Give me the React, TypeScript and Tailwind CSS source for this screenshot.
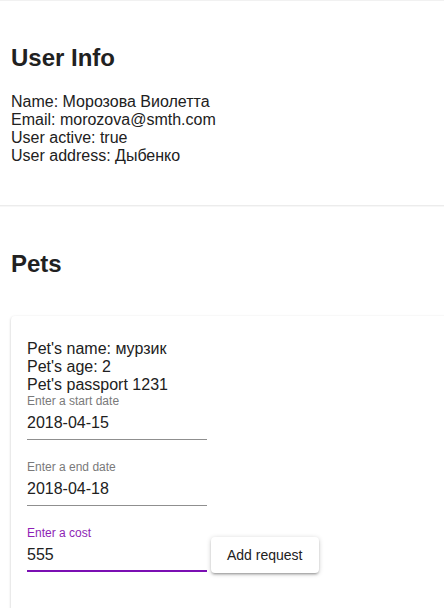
import React from "react";

const font = { fontFamily: '"Liberation Sans", Arial, sans-serif' };

function Field({
  label,
  value,
  focused = false,
  className = "",
}: {
  label: string;
  value: string;
  focused?: boolean;
  className?: string;
}) {
  return (
    <div className={`relative h-12 w-[180px] ${className}`}>
      <label
        className={`absolute left-0 top-[3px] text-[12px] leading-[12px] ${
          focused ? "text-[#8e1fb5]" : "text-[#7a7a7a]"
        }`}
      >
        {label}
      </label>
      <div
        className={`absolute inset-x-0 bottom-0 h-8 pt-[5px] text-[16px] leading-[19px] text-[#212121] ${
          focused ? "border-b-2 border-[#7b0fb3]" : "border-b border-[#8f8f8f]"
        }`}
      >
        {value}
      </div>
    </div>
  );
}

export default function App() {
  return (
    <div style={font} className="h-[608px] overflow-hidden bg-white text-[#212121]">
      <div className="h-px bg-[#f1f1f1]" />

      <section className="px-[11px] pt-[43px] pb-[40px]">
        <h2 className="text-[24px] font-bold leading-[28px]">User Info</h2>
        <div className="mt-[21px] text-[16px] leading-[18px]">
          <div>Name: Морозова Виолетта</div>
          <div>Email: morozova@smth.com</div>
          <div>User active: true</div>
          <div>User address: Дыбенко</div>
        </div>
      </section>

      <div className="h-px bg-[#ececec]" />
      <div className="h-px bg-[#f7f7f7]" />

      <section className="pl-[11px] pt-[43px]">
        <h2 className="text-[24px] font-bold leading-[28px]">Pets</h2>
        <div className="mt-[38px] w-[calc(100%+20px)] rounded-[4px] bg-white pl-4 pt-6 pb-10 shadow-[0_1px_3px_rgba(0,0,0,0.2),0_1px_1px_rgba(0,0,0,0.14),0_2px_1px_-1px_rgba(0,0,0,0.12)]">
          <div className="text-[16px] leading-[18px]">
            <div>Pet's name: мурзик</div>
            <div>Pet's age: 2</div>
            <div>Pet's passport 1231</div>
          </div>
          <Field label="Enter a start date" value="2018-04-15" className="-mt-[2px]" />
          <Field label="Enter a end date" value="2018-04-18" className="mt-[18px]" />
          <div className="mt-[18px] flex items-end gap-1">
            <Field label="Enter a cost" value="555" focused />
            <button
              type="button"
              className="-mb-px h-9 rounded-[4px] bg-white px-4 text-[14px] leading-none text-[#212121] shadow-[0_1px_5px_rgba(0,0,0,0.2),0_2px_2px_rgba(0,0,0,0.14),0_3px_1px_-2px_rgba(0,0,0,0.12)]"
            >
              Add request
            </button>
          </div>
        </div>
      </section>
    </div>
  );
}
